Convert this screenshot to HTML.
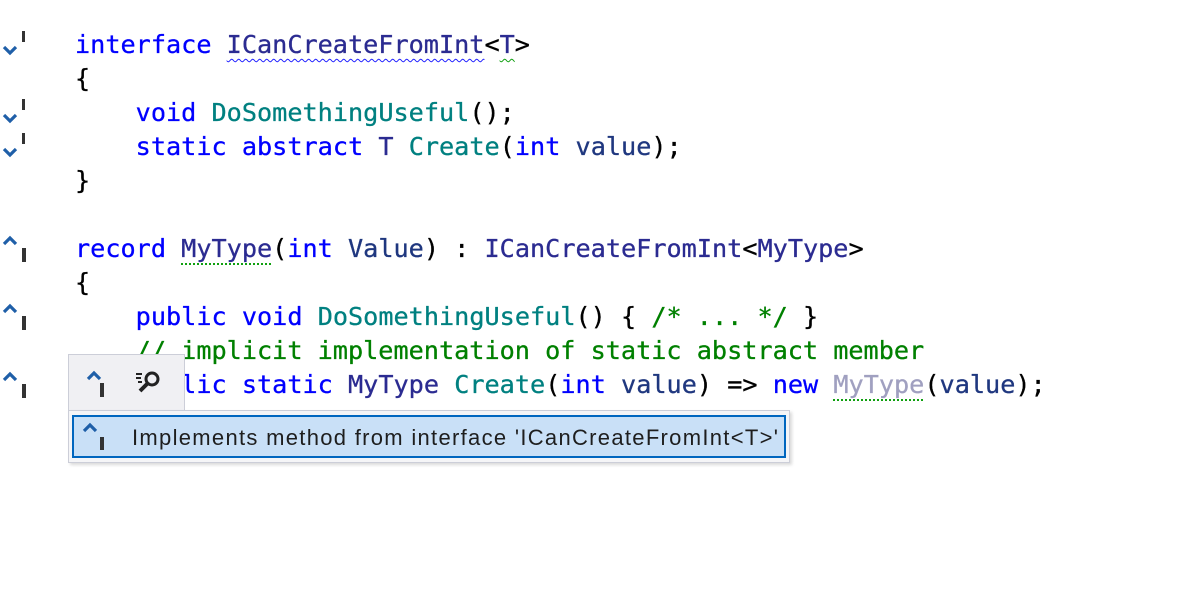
<!DOCTYPE html>
<html><head><meta charset="utf-8"><style>
body{margin:0;width:1200px;height:600px;background:#fff;position:relative;overflow:hidden}
.code{position:absolute;left:75px;top:28px;font-family:"DejaVu Sans Mono","Liberation Mono",monospace;font-size:25.2px;line-height:34px;white-space:pre;color:#000;-webkit-text-stroke:0.3px currentColor}
.k{color:#0000ff}.t{color:#2b2b91}.m{color:#008080}.c{color:#008000}.p{color:#1f377f}.g{color:#a0a0c0}
.sq{text-decoration:underline wavy #2020ff;text-decoration-thickness:1px;text-underline-offset:5px}
.sg{text-decoration:underline wavy #10a010;text-decoration-thickness:1px;text-underline-offset:5px}
.dt{text-decoration:underline dotted #10a010;text-decoration-thickness:2px;text-underline-offset:6px}
svg.i{position:absolute}
.pop{position:absolute;left:68px;top:354px;width:115px;height:56px;background:#f0f0f3;border:1px solid #ccced8;border-bottom:none}
.list{position:absolute;left:68px;top:410px;width:720px;height:51px;background:#f5f5f7;border:1px solid #ccced8;box-shadow:2px 2px 3px rgba(0,0,0,.15)}
.row{position:absolute;left:3px;top:4px;width:710px;height:39px;background:#c9e0f7;border:2px solid #0066bf;font-family:"Liberation Sans",sans-serif;font-size:22px;letter-spacing:1.3px;line-height:41px;color:#1e1e1e}
</style></head><body>
<div class="code"><span class="k">interface</span> <span class="t sq">ICanCreateFromInt</span>&lt;<span class="t sg">T</span>&gt;
{
    <span class="k">void</span> <span class="m">DoSomethingUseful</span>();
    <span class="k">static</span> <span class="k">abstract</span> <span class="t">T</span> <span class="m">Create</span>(<span class="k">int</span> <span class="p">value</span>);
}

<span class="k">record</span> <span class="t dt">MyType</span>(<span class="k">int</span> <span class="p">Value</span>) : <span class="t">ICanCreateFromInt</span>&lt;<span class="t">MyType</span>&gt;
{
    <span class="k">public</span> <span class="k">void</span> <span class="m">DoSomethingUseful</span>() { <span class="c">/* ... */</span> }
    <span class="c">// implicit implementation of static abstract member</span>
    <span class="k">public</span> <span class="k">static</span> <span class="t">MyType</span> <span class="m">Create</span>(<span class="k">int</span> <span class="p">value</span>) =&gt; <span class="k">new</span> <span class="g dt">MyType</span>(<span class="p">value</span>);</div>

<svg class="i" style="left:0;top:28px" width="30" height="30"><path d="M4 19l6 6 6-6" stroke="#1f5fa8" stroke-width="3.2" fill="none"/><rect x="22" y="3" width="3" height="11" fill="#333"/></svg>
<svg class="i" style="left:0;top:96px" width="30" height="30"><path d="M4 19l6 6 6-6" stroke="#1f5fa8" stroke-width="3.2" fill="none"/><rect x="22" y="3" width="3" height="11" fill="#333"/></svg>
<svg class="i" style="left:0;top:130px" width="30" height="30"><path d="M4 19l6 6 6-6" stroke="#1f5fa8" stroke-width="3.2" fill="none"/><rect x="22" y="3" width="3" height="11" fill="#333"/></svg>

<svg class="i" style="left:0;top:233px" width="30" height="32"><path d="M4 11l6-6 6 6" stroke="#1f5fa8" stroke-width="3.2" fill="none"/><rect x="22" y="15" width="4" height="14" fill="#333"/></svg>
<svg class="i" style="left:0;top:301px" width="30" height="32"><path d="M4 11l6-6 6 6" stroke="#1f5fa8" stroke-width="3.2" fill="none"/><rect x="22" y="15" width="4" height="14" fill="#333"/></svg>
<svg class="i" style="left:0;top:369px" width="30" height="32"><path d="M4 11l6-6 6 6" stroke="#1f5fa8" stroke-width="3.2" fill="none"/><rect x="22" y="15" width="4" height="14" fill="#333"/></svg>

<div class="pop">
<svg class="i" style="left:15px;top:13px" width="30" height="32"><path d="M4 11l6-6 6 6" stroke="#1f5fa8" stroke-width="3.2" fill="none"/><rect x="16" y="15" width="4" height="14" fill="#333"/></svg>
<svg class="i" style="left:64px;top:14px" width="34" height="30"><path d="M3 5h6M3 9h5M5 13h4" stroke="#222" stroke-width="2"/><circle cx="19" cy="10" r="6" stroke="#222" stroke-width="3" fill="none"/><path d="M14 15l-7 7" stroke="#222" stroke-width="4"/></svg>
</div>
<div class="list"><div class="row">
<svg class="i" style="left:6px;top:3px" width="30" height="32"><path d="M4 11l6-6 6 6" stroke="#1f5fa8" stroke-width="3.2" fill="none"/><rect x="20" y="17" width="4" height="13" fill="#333"/></svg>
<span style="position:absolute;left:58px;top:0">Implements method from interface 'ICanCreateFromInt&lt;T&gt;'</span>
</div></div>
</body></html>
